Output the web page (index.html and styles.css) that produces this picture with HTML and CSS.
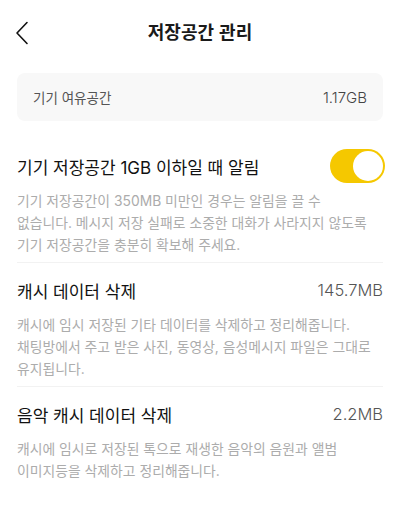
FILE: index.html
```html
<!DOCTYPE html>
<html lang="ko">
<head>
<meta charset="utf-8">
<link rel="stylesheet" href="styles.css">
</head>
<body>
<div class="page">
  <header class="header">
    <svg class="back" width="14" height="24" viewBox="0 0 14 24" aria-hidden="true">
      <path d="M12 1.5 L2 12 L12 22.5" fill="none" stroke="#111" stroke-width="1.6" stroke-linecap="round" stroke-linejoin="round"/>
    </svg>
    <h1 class="title">저장공간 관리</h1>
  </header>

  <div class="card">
    <span class="card-label">기기 여유공간</span>
    <span class="card-value">1.17GB</span>
  </div>

  <section class="item first">
    <div class="item-row">
      <span class="item-title">기기 저장공간 1GB 이하일 때 알림</span>
      <span class="toggle"><span class="knob"></span></span>
    </div>
    <p class="item-desc">기기 저장공간이 350MB 미만인 경우는 알림을 끌 수<br>없습니다. 메시지 저장 실패로 소중한 대화가 사라지지 않도록<br>기기 저장공간을 충분히 확보해 주세요.</p>
  </section>

  <section class="item">
    <div class="item-row">
      <span class="item-title">캐시 데이터 삭제</span>
      <span class="item-value">145.7MB</span>
    </div>
    <p class="item-desc">캐시에 임시 저장된 기타 데이터를 삭제하고 정리해줍니다.<br>채팅방에서 주고 받은 사진, 동영상, 음성메시지 파일은 그대로<br>유지됩니다.</p>
  </section>

  <section class="item last">
    <div class="item-row">
      <span class="item-title">음악 캐시 데이터 삭제</span>
      <span class="item-value">2.2MB</span>
    </div>
    <p class="item-desc">캐시에 임시로 저장된 톡으로 재생한 음악의 음원과 앨범<br>이미지등을 삭제하고 정리해줍니다.</p>
  </section>
</div>
</body>
</html>
```

FILE: styles.css
```css
* { box-sizing: border-box; }
html, body { margin: 0; padding: 0; background: #fff; }
body {
  font-family: Inter, "Noto Sans CJK KR", "Noto Sans", sans-serif;
  color: #111;
  width: 400px;
  height: 518px;
  overflow: hidden;
}
.page { padding: 0 17px; }
.header {
  position: relative;
  height: 64px;
  display: flex;
  align-items: center;
  justify-content: center;
}
.back {
  position: absolute;
  left: -2px;
  top: 21px;
}
.title {
  margin: 0 0 2px;
  font-size: 18px;
  font-weight: 700;
  font-family: "Noto Sans CJK KR", sans-serif;
  color: #1a1a1a;
}
.card {
  margin-top: 9px;
  margin-bottom: 16px;
  height: 48px;
  background: #f8f8f8;
  border-radius: 8px;
  display: flex;
  align-items: center;
  justify-content: space-between;
  padding: 0 16px;
  font-size: 13.5px;
  color: #555;
}
.card-value { font-size: 15px; font-weight: 300; color: #444; }
.item {
  border-bottom: 1px solid #f2f2f2;
  padding-top: 9px;
  padding-bottom: 6px;
}
.item.first { padding-top: 11px; }
.item.last { border-bottom: none; }
.item-row {
  display: flex;
  align-items: center;
  justify-content: space-between;
  height: 36px;
}
.item-title {
  font-size: 17px;
  color: #111;
}
.item-value {
  font-size: 16.5px;
  font-weight: 300;
  color: #555;
}
.toggle {
  width: 55px;
  height: 34px;
  border-radius: 17px;
  background: #f5c800;
  display: flex;
  align-items: center;
  justify-content: flex-end;
  padding: 2px;
  margin-right: -2px;
}
.knob {
  width: 30px;
  height: 30px;
  border-radius: 50%;
  background: #fff;
}
.item-desc {
  margin: 6px 0 0;
  font-size: 13.85px;
  line-height: 22px;
  color: #acacac;
}
```
